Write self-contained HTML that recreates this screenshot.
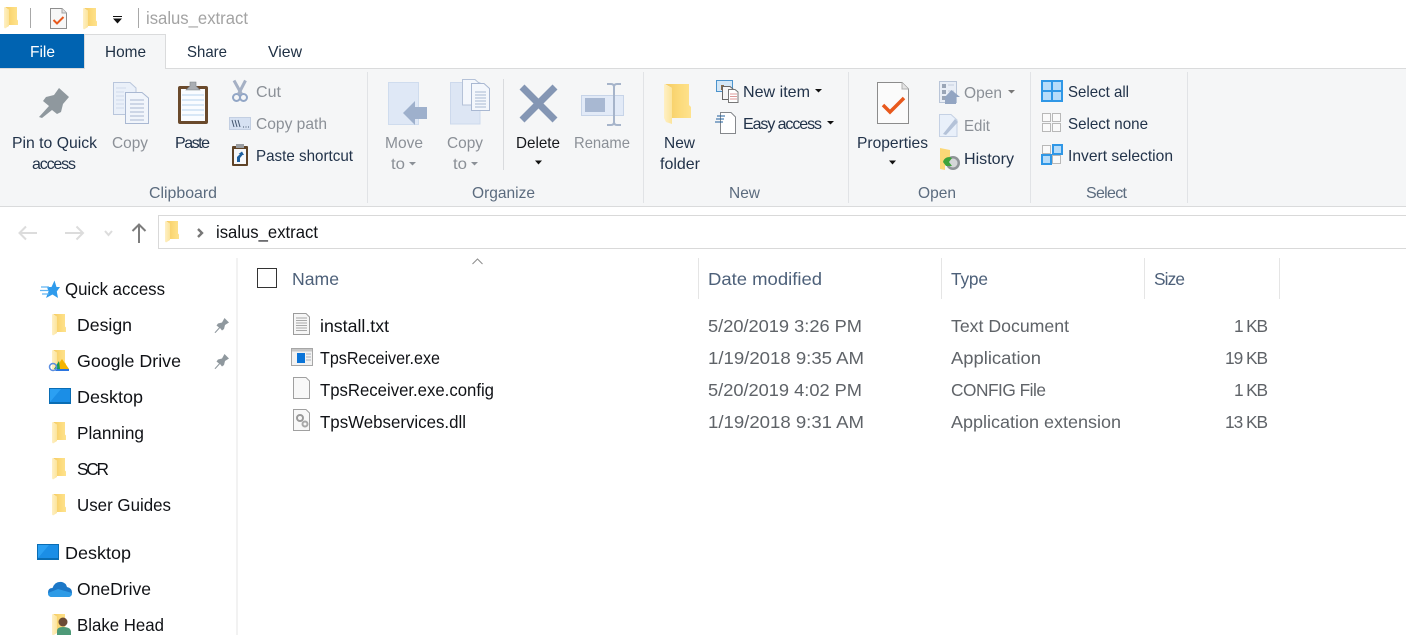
<!DOCTYPE html>
<html><head><meta charset="utf-8"><title>isalus_extract</title>
<style>
html,body{margin:0;padding:0;background:#fff;width:1406px;height:635px;overflow:hidden}
svg{display:block}
text{font-family:"Liberation Sans",sans-serif;font-size:16px}
.d{fill:#22334a}.g{fill:#8b9097}.k{fill:#101216;font-size:17.3px}.kr{fill:#16181c}.h{fill:#4d6079;font-size:17.3px}.r{fill:#5f6368;font-size:17.3px}.l{fill:#5b6b7e}.b{fill:#1f3044}.t{font-size:17.3px}
</style></head><body>
<svg width="1406" height="635" viewBox="0 0 1406 635" xmlns="http://www.w3.org/2000/svg">
<defs>
<linearGradient id="fg" x1="0" y1="0" x2="1" y2="0"><stop offset="0" stop-color="#f5cb62"/><stop offset=".6" stop-color="#fcdb7c"/><stop offset="1" stop-color="#fee28e"/></linearGradient>
<linearGradient id="fl" x1="0" y1="0" x2="1" y2="0"><stop offset="0" stop-color="#fef0c4"/><stop offset="1" stop-color="#fce49c"/></linearGradient>
<symbol id="folder" viewBox="0 0 14 21" overflow="visible">
<path d="M1 0H13V12.500L14 13.500V18H5V3Z" fill="url(#fg)"/>
<path d="M0 0L5 2.500V19L1 21.500L0 20.500Z" fill="url(#fl)"/>
</symbol>
<symbol id="pin" viewBox="0 0 16 16" overflow="visible">
<path d="M0.500 15.500L5 10.500L2.500 8.500L4 6.500L8 5.500L10.500 1L15 5.500L11 8L10 12L8 13.500L6 11L1.500 16Z" fill="#8f989e"/>
</symbol>
<symbol id="desk" viewBox="0 0 22 16" overflow="visible">
<rect width="22" height="16" fill="#0a6db4"/>
<rect x="1" y="1" width="20" height="13" fill="#2ba0f3"/>
<path d="M1 14L12 1H21V14Z" fill="#1b8ee6"/>
</symbol>
</defs>

<!-- title bar -->
<use href="#folder" x="4" y="7" width="14" height="21"/>
<rect x="30" y="8" width="1" height="20" fill="#a8a8a8"/>
<path d="M50.500 8.500H62L66.500 13V28.500H50.500Z" fill="#f7f7f7" stroke="#8e8e8e"/>
<path d="M62 8.500V13H66.500" fill="#e4e4e4" stroke="#a4a4a4"/>
<path d="M53.500 20L57 23.500L63.500 17" fill="none" stroke="#e8591d" stroke-width="2"/>
<use href="#folder" x="83" y="8" width="14" height="21"/>
<rect x="113" y="16" width="9" height="1" fill="#111"/>
<path d="M113 18.500H122L117.500 23.500Z" fill="#111"/>
<rect x="138" y="8" width="1" height="20" fill="#a8a8a8"/>
<text x="146" y="24" textLength="102" lengthAdjust="spacingAndGlyphs" fill="#a3a3a3" class="t">isalus_extract</text>

<!-- tabs -->
<rect x="0" y="34" width="84" height="34" fill="#0063b1"/>
<text x="30" y="57" textLength="25" lengthAdjust="spacingAndGlyphs" fill="#fff">File</text>
<rect x="0" y="68" width="1406" height="139" fill="#f5f6f7"/>
<rect x="0" y="68" width="1406" height="1" fill="#dadbdc"/>
<rect x="0" y="206" width="1406" height="1" fill="#dadbdc"/>
<rect x="84" y="34" width="82" height="35" fill="#f5f6f7"/>
<path d="M84.500 69V34.500H165.500V69" fill="none" stroke="#dadbdc"/>
<text x="105" y="57" textLength="41" lengthAdjust="spacingAndGlyphs" class="b">Home</text>
<text x="187" y="57" textLength="40" lengthAdjust="spacingAndGlyphs" class="b">Share</text>
<text x="268" y="57" textLength="34" lengthAdjust="spacingAndGlyphs" class="b">View</text>

<!-- separators -->
<g fill="#e1e3e6">
<rect x="367" y="72" width="1" height="131"/><rect x="643" y="72" width="1" height="131"/><rect x="848" y="72" width="1" height="131"/><rect x="1030" y="72" width="1" height="131"/><rect x="1187" y="72" width="1" height="131"/>
<rect x="503" y="79" width="1" height="91" fill="#d9dbde"/>
</g>

<!-- Clipboard icons -->
<path d="M39 117L49 106L43 101L46 97L54 95L59 88L69 97L63 104L61 112L57 114L52 110L42 118Z" fill="#8f989e"/>
<path d="M113.500 82.500H130L136 88V114.500H113.500Z" fill="#eaf0f9" stroke="#b9c6dc"/>
<path d="M125.500 92.500H142L148.500 98V123.500H125.500Z" fill="#f1f5fb" stroke="#a9b8d2"/>
<path d="M130 100H144M130 104H144M130 108H144M130 112H144M130 116H144M130 120H144" stroke="#a9b8d2"/>
<path d="M116 88H126M116 92H124M116 96H124M116 100H124M116 104H124M116 108H124" stroke="#d0daea"/>
<rect x="178" y="86" width="30" height="38" rx="2" fill="#6a4a2c"/>
<rect x="181" y="89" width="24" height="32" fill="#fafcff"/>
<path d="M182 95H204M182 100H204M182 105H204M182 110H204M182 115H204" stroke="#b5d2ee"/>
<path d="M186 90L190 86V82H196V86L200 90Z" fill="#a9adb2" stroke="#7d8186" stroke-width=".6"/>
<circle cx="236.500" cy="97.500" r="3.500" fill="none" stroke="#92a6c6" stroke-width="2"/>
<circle cx="243.500" cy="97.500" r="3.500" fill="none" stroke="#92a6c6" stroke-width="2"/>
<path d="M234 80.500L241.500 94M245.500 80.500L238.500 94" stroke="#a5b0c4" stroke-width="3" fill="none"/>
<rect x="229.500" y="117.500" width="21" height="12" fill="#d6e1f2" stroke="#c3cfe2"/>
<path d="M232 120L234 127M235 120L237 127M238 120L240 127" stroke="#44566f"/>
<path d="M243 127h1M245.500 127h1M248 127h1" stroke="#44566f"/>
<rect x="232" y="146" width="16" height="20" rx="1" fill="#5f4327"/>
<rect x="234" y="149" width="12" height="15" fill="#f7f8fa"/>
<rect x="236" y="144" width="8" height="4" fill="#9a9da1"/>
<path d="M237 162V157L240 154H238.500L242 151.500L244 155H242.500L240 158V162Z" fill="#1d5f9e"/>

<text x="12" y="148" textLength="85" lengthAdjust="spacingAndGlyphs" class="d">Pin to Quick</text>
<text x="32" y="169" textLength="44" lengthAdjust="spacing" class="d">access</text>
<text x="112" y="148" textLength="36" lengthAdjust="spacingAndGlyphs" class="g">Copy</text>
<text x="175" y="148" textLength="35" lengthAdjust="spacing" class="d">Paste</text>
<text x="256" y="97" textLength="25" lengthAdjust="spacingAndGlyphs" class="g">Cut</text>
<text x="256" y="129" textLength="71" lengthAdjust="spacingAndGlyphs" class="g">Copy path</text>
<text x="256" y="161" textLength="97" lengthAdjust="spacingAndGlyphs" class="d">Paste shortcut</text>
<text x="149" y="198" textLength="68" lengthAdjust="spacingAndGlyphs" class="l">Clipboard</text>

<!-- Organize icons -->
<path d="M388.500 82.500H418.500V124.500H388.500Z" fill="#dfe8f6" stroke="#cfdcee"/>
<path d="M403 113L415 101V107H427V119H415V125Z" fill="#9eb0cc"/>
<path d="M450.500 82.500H480V124H450.500Z" fill="#dde6f4" stroke="#cdd9ec"/>
<path d="M462.500 79.500H475L480 84V105H462.500Z" fill="#f4f7fc" stroke="#b5c2d8"/>
<path d="M471.500 83.500H484L489.500 88.500V110.500H471.500Z" fill="#f4f7fc" stroke="#a9b8d2"/>
<path d="M475 92H486M475 95H486M475 98H486M475 101H486M475 104H486M475 107H486" stroke="#a9b8d2"/>
<path d="M522 87L555 120M555 87L522 120" stroke="#8496b4" stroke-width="7"/>
<rect x="581.500" y="95.500" width="42" height="20" fill="#e2eaf7" stroke="#c7d4e8"/>
<rect x="585" y="98" width="20" height="14" fill="#a8b8d2"/>
<path d="M607 84H611Q614 84 614 87V122Q614 125 611 125H607M621 84H617Q614 84 614 87M614 122Q614 125 617 125H621" fill="none" stroke="#a6b4ca" stroke-width="2"/>

<text x="385" y="148" textLength="38" lengthAdjust="spacingAndGlyphs" class="g">Move</text>
<text x="391" y="169" textLength="14" lengthAdjust="spacingAndGlyphs" class="g">to</text>
<path d="M409 162H416L412.500 165.500Z" fill="#8b9097"/>
<text x="447" y="148" textLength="36" lengthAdjust="spacingAndGlyphs" class="g">Copy</text>
<text x="453" y="169" textLength="14" lengthAdjust="spacingAndGlyphs" class="g">to</text>
<path d="M471 162H478L474.500 165.500Z" fill="#8b9097"/>
<text x="516" y="148" textLength="44" lengthAdjust="spacingAndGlyphs" class="kr">Delete</text>
<path d="M535 160.500H542L538.500 164.500Z" fill="#111"/>
<text x="574" y="148" textLength="56" lengthAdjust="spacingAndGlyphs" class="g">Rename</text>
<text x="472" y="198" textLength="63" lengthAdjust="spacingAndGlyphs" class="l">Organize</text>

<!-- New -->
<path d="M665 84H689V105L691 107V118H672V88Z" fill="url(#fg)"/>
<path d="M664 84L672 88V118L672 124L666 122L664 118Z" fill="url(#fl)"/>
<rect x="716.500" y="80.500" width="16" height="11" fill="#d4e7f6" stroke="#4b93cc"/>
<path d="M721 85h3v5h-3z" fill="#8a6b4a"/>
<path d="M722.500 86.500H730L733 89V99.500H722.500Z" fill="#f5f5f5" stroke="#666"/>
<path d="M728.500 89.500H735L738 92V102.500H728.500Z" fill="#fff" stroke="#777"/>
<path d="M730 94H737M730 96.500H737M730 99H737" stroke="#d99"/>
<path d="M720.500 112.500H731L735.500 117V133.500H720.500Z" fill="#fff" stroke="#85888c"/>
<path d="M717 116H725M716 119H724M715 122H723" stroke="#1f5f9e"/>
<text x="664" y="148" textLength="31" lengthAdjust="spacingAndGlyphs" class="d">New</text>
<text x="660" y="169" textLength="40" lengthAdjust="spacingAndGlyphs" class="d">folder</text>
<text x="743" y="97" textLength="67" lengthAdjust="spacingAndGlyphs" class="d">New item</text>
<path d="M815 89H822L818.500 92.500Z" fill="#111"/>
<text x="743" y="129" textLength="79" lengthAdjust="spacing" class="d">Easy access</text>
<path d="M827 121H834L830.500 124.500Z" fill="#111"/>
<text x="729" y="198" textLength="31" lengthAdjust="spacingAndGlyphs" class="l">New</text>

<!-- Open -->
<path d="M877.500 82.500H902L908.500 89V123.500H877.500Z" fill="#fbfbfb" stroke="#8c8c8c"/>
<path d="M902 82.500V89H908.500" fill="#e4e4e4" stroke="#b0b0b0"/>
<path d="M883 105L890 112L904 98" fill="none" stroke="#e8591d" stroke-width="3.500"/>
<text x="857" y="148" textLength="71" lengthAdjust="spacingAndGlyphs" class="d">Properties</text>
<path d="M889 160.500H896L892.500 164.500Z" fill="#111"/>
<rect x="939.500" y="81.500" width="17" height="21" fill="#e9eef6" stroke="#b9c5d8"/>
<path d="M942 84h4v4h-4zM942 90h4v4h-4zM942 96h4v4h-4z" fill="#9aa5b6"/>
<path d="M948 85H954M948 91H954" stroke="#c5cfdf"/>
<path d="M945 104V97L951.500 90L960 97H956V104Z" fill="#93a5c2"/>
<path d="M939.500 114.500H951L957 120V136.500H939.500Z" fill="#e9f0fa" stroke="#c5d1e4"/>
<path d="M943 134L955 119L958 122L946 135Z" fill="#b4c2d8"/>
<text x="964" y="98" textLength="38" lengthAdjust="spacingAndGlyphs" class="g">Open</text>
<path d="M1008 90H1015L1011.500 93.500Z" fill="#777"/>
<text x="964" y="131" textLength="26" lengthAdjust="spacingAndGlyphs" class="g">Edit</text>
<path d="M940 148L950 150V165H945V170L940 169Z" fill="#fcd877"/>
<circle cx="953" cy="163" r="7" fill="#8f9498"/>
<circle cx="953" cy="163" r="4.500" fill="#d5d7d8"/>
<path d="M943 162A6 6 0 0 1 952 158L949 162L952 166H946Z" fill="#3ea33a"/>
<text x="964" y="164" textLength="50" lengthAdjust="spacingAndGlyphs" class="d">History</text>
<text x="918" y="198" textLength="38" lengthAdjust="spacingAndGlyphs" class="l">Open</text>

<!-- Select -->
<rect x="1041" y="80" width="22" height="22" fill="#2f97e6"/>
<path d="M1043 82h8v8h-8zM1053 82h8v8h-8zM1043 92h8v8h-8zM1053 92h8v8h-8z" fill="#b6dcfa"/>
<path d="M1042.500 113.500h8v8h-8zM1052.500 113.500h8v8h-8zM1042.500 123.500h8v8h-8zM1052.500 123.500h8v8h-8z" fill="#fafafa" stroke="#b8b8b8"/>
<path d="M1042.500 145.500h8v8h-8zM1052.500 155.500h8v8h-8z" fill="#fafafa" stroke="#b8b8b8"/>
<rect x="1052" y="144" width="11" height="11" fill="#2f97e6"/><rect x="1054" y="146" width="7" height="7" fill="#b6dcfa"/>
<rect x="1041" y="154" width="11" height="11" fill="#2f97e6"/><rect x="1043" y="156" width="7" height="7" fill="#b6dcfa"/>
<text x="1068" y="97" textLength="61" lengthAdjust="spacingAndGlyphs" class="d">Select all</text>
<text x="1068" y="129" textLength="80" lengthAdjust="spacingAndGlyphs" class="d">Select none</text>
<text x="1068" y="161" textLength="105" lengthAdjust="spacingAndGlyphs" class="d">Invert selection</text>
<text x="1086" y="198" textLength="41" lengthAdjust="spacing" class="l">Select</text>

<!-- Address bar -->
<g fill="none" stroke="#dcdcdc" stroke-width="2">
<path d="M20 233H37M26 226.500L19.500 233L26 239.500"/>
<path d="M65 233H83M76.500 226.500L83 233L76.500 239.500"/>
<path d="M105 231L108.500 235L112 231"/>
</g>
<path d="M139 243V225M132.500 231L139 224.500L145.500 231" fill="none" stroke="#7d7d7d" stroke-width="2"/>
<rect x="158.500" y="215.500" width="1250" height="33" fill="#fff" stroke="#d9d9d9"/>
<use href="#folder" x="165" y="221" width="14" height="21"/>
<path d="M198 229L202 233L198 237" fill="none" stroke="#777" stroke-width="2.400"/>
<text x="216" y="238" textLength="102" lengthAdjust="spacingAndGlyphs" class="k">isalus_extract</text>

<!-- Sidebar -->
<rect x="236" y="258" width="2" height="377" fill="#f2f2f2"/>
<path d="M47 287H51.500L54.500 280.500L56.500 287H60L56.800 291.500L58 298L52.500 294.500L46 298L48.500 291.500Z" fill="#2f9bec"/>
<path d="M41 287H49M40 290.500H48M42 294H49" stroke="#5fb4f2" stroke-width="1.200"/>
<text x="65" y="295" textLength="100" lengthAdjust="spacingAndGlyphs" class="k">Quick access</text>

<use href="#folder" x="52" y="314" width="14" height="21"/>
<text x="77" y="331" textLength="55" lengthAdjust="spacingAndGlyphs" class="k">Design</text>
<use href="#pin" x="214" y="317" width="16" height="16"/>

<use href="#folder" x="52" y="350" width="14" height="21"/>
<path d="M62 359L69 369H55Z" fill="#f5b400"/><path d="M59 361L54 369H60Z" fill="#1a9b55"/><path d="M57 369H69V371H55Z" fill="#2b75e0"/>
<circle cx="53" cy="367" r="3.500" fill="none" stroke="#5b8de0" stroke-width="1.500"/>
<text x="77" y="367" textLength="104" lengthAdjust="spacingAndGlyphs" class="k">Google Drive</text>
<use href="#pin" x="214" y="353" width="16" height="16"/>

<use href="#desk" x="49" y="388" width="22" height="16"/>
<text x="77" y="403" textLength="66" lengthAdjust="spacingAndGlyphs" class="k">Desktop</text>

<use href="#folder" x="52" y="422" width="14" height="21"/>
<text x="77" y="439" textLength="67" lengthAdjust="spacingAndGlyphs" class="k">Planning</text>
<use href="#folder" x="52" y="458" width="14" height="21"/>
<text x="77" y="475" textLength="32" lengthAdjust="spacing" class="k">SCR</text>
<use href="#folder" x="52" y="494" width="14" height="21"/>
<text x="77" y="511" textLength="94" lengthAdjust="spacingAndGlyphs" class="k">User Guides</text>

<use href="#desk" x="37" y="544" width="22" height="16"/>
<text x="65" y="559" textLength="66" lengthAdjust="spacingAndGlyphs" class="k">Desktop</text>

<path d="M52 597Q48 597 48 592.500Q48 588 52.500 588Q55 581 62 582Q66 583 67 587Q72 588 72 592.500Q72 597 68 597Z" fill="#1c78c8"/>
<path d="M52 597Q48 597 48 593L58 589L72 593Q72 597 68 597Z" fill="#2e9be6"/>
<text x="77" y="595" textLength="74" lengthAdjust="spacingAndGlyphs" class="k">OneDrive</text>

<use href="#folder" x="52" y="614" width="14" height="21"/>
<circle cx="63" cy="622" r="4.500" fill="#6b4a35"/>
<path d="M57 635V631Q57 627 63 627Q71 627 71 632V635Z" fill="#4e9a78"/>
<text x="77" y="631" textLength="87" lengthAdjust="spacingAndGlyphs" class="k">Blake Head</text>

<!-- Column headers -->
<rect x="257.500" y="268.500" width="19" height="19" fill="#fff" stroke="#333"/>
<text x="292" y="285" textLength="47" lengthAdjust="spacingAndGlyphs" class="h">Name</text>
<path d="M472.500 264L477.500 259L482.500 264" fill="none" stroke="#8d8d8d"/>
<g fill="#e5e5e5"><rect x="698" y="258" width="1" height="41"/><rect x="941" y="258" width="1" height="41"/><rect x="1144" y="258" width="1" height="41"/><rect x="1279" y="258" width="1" height="41"/></g>
<text x="708" y="285" textLength="114" lengthAdjust="spacingAndGlyphs" class="h">Date modified</text>
<text x="951" y="285" textLength="37" lengthAdjust="spacing" class="h">Type</text>
<text x="1154" y="285" textLength="31" lengthAdjust="spacing" class="h">Size</text>

<!-- file icons -->
<path d="M293.500 313.500H306L309.500 317V334.500H293.500Z" fill="#f6f6f6" stroke="#9c9c9c"/>
<path d="M296 318H307M296 320.500H307M296 323H307M296 325.500H307M296 328H307M296 330.500H307" stroke="#a8a8a8"/>
<rect x="291.500" y="348.500" width="21" height="17" fill="#f2f2f2" stroke="#a6a6a6"/>
<rect x="292" y="349" width="20" height="2.500" fill="#c6c6c6"/>
<rect x="297" y="353" width="8" height="10" fill="#0a74d8"/>
<path d="M306 354H311M306 357H311M306 360H311" stroke="#aab0b8"/>
<path d="M293.500 377.500H306L309.500 381V398.500H293.500Z" fill="#f8f8f8" stroke="#a0a0a0"/>
<path d="M293.500 409.500H306L309.500 413V430.500H293.500Z" fill="#f8f8f8" stroke="#a0a0a0"/>
<circle cx="300" cy="418" r="3" fill="none" stroke="#9a9a9a" stroke-width="2"/>
<circle cx="305" cy="424" r="2.500" fill="none" stroke="#a8a8a8" stroke-width="2"/>

<!-- rows -->
<text x="320" y="332" textLength="69" lengthAdjust="spacingAndGlyphs" class="k">install.txt</text>
<text x="320" y="364" textLength="120" lengthAdjust="spacingAndGlyphs" class="k">TpsReceiver.exe</text>
<text x="320" y="396" textLength="174" lengthAdjust="spacingAndGlyphs" class="k">TpsReceiver.exe.config</text>
<text x="320" y="428" textLength="146" lengthAdjust="spacingAndGlyphs" class="k">TpsWebservices.dll</text>

<text x="708" y="332" textLength="154" lengthAdjust="spacingAndGlyphs" class="r">5/20/2019 3:26 PM</text>
<text x="708" y="364" textLength="156" lengthAdjust="spacingAndGlyphs" class="r">1/19/2018 9:35 AM</text>
<text x="708" y="396" textLength="154" lengthAdjust="spacingAndGlyphs" class="r">5/20/2019 4:02 PM</text>
<text x="708" y="428" textLength="156" lengthAdjust="spacingAndGlyphs" class="r">1/19/2018 9:31 AM</text>

<text x="951" y="332" textLength="118" lengthAdjust="spacingAndGlyphs" class="r">Text Document</text>
<text x="951" y="364" textLength="90" lengthAdjust="spacingAndGlyphs" class="r">Application</text>
<text x="951" y="396" textLength="95" lengthAdjust="spacing" class="r">CONFIG File</text>
<text x="951" y="428" textLength="170" lengthAdjust="spacingAndGlyphs" class="r">Application extension</text>

<text x="1234" y="332" textLength="34" lengthAdjust="spacing" class="r">1 KB</text>
<text x="1225" y="364" textLength="43" lengthAdjust="spacing" class="r">19 KB</text>
<text x="1234" y="396" textLength="34" lengthAdjust="spacing" class="r">1 KB</text>
<text x="1225" y="428" textLength="43" lengthAdjust="spacing" class="r">13 KB</text>
</svg>
</body></html>
